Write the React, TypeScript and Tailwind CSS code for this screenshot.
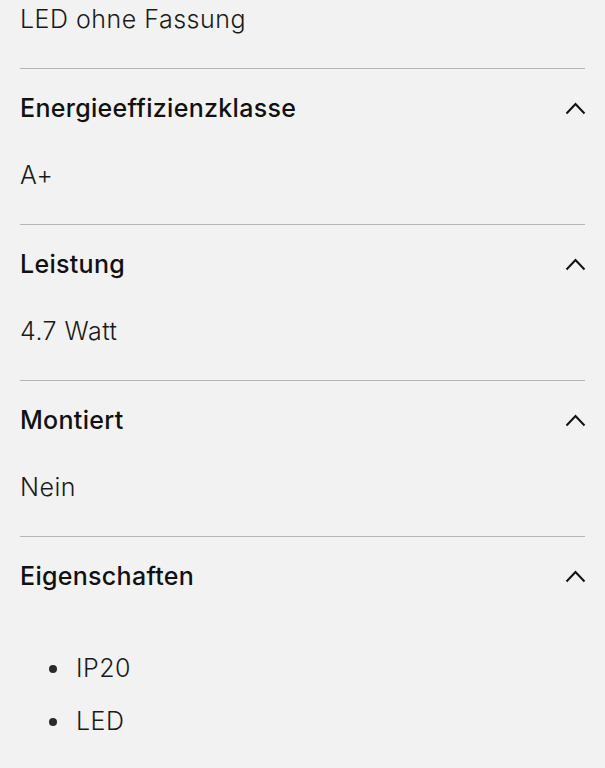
const sections = [
    {title: "Energieeffizienzklasse", value: "A+"},
    {title: "Leistung", value: "4.7 Watt"},
    {title: "Montiert", value: "Nein"},
]

function Chevron() {
    return (
        <svg width="21" height="13" viewBox="0 0 21 13" fill="none" className="shrink-0 -mr-[1px]">
            <polyline points="1.5,11.5 10.5,2 19.5,11.5" stroke="#111" strokeWidth="2" strokeLinejoin="miter"/>
        </svg>
    )
}

function Header({title}: { title: string }) {
    return (
        <div className="h-[80px] flex items-center justify-between border-t border-[#b5b5b5]">
            <h2 className="text-[25px] font-medium text-[#111] tracking-[0.3px]">{title}</h2>
            <Chevron/>
        </div>
    )
}

export default function App() {
    return (
        <div className="min-h-[768px] bg-[#f2f2f2] px-5 font-['Inter',sans-serif] text-[#1a1a1a] overflow-hidden">
            <div className="h-[38px] leading-[38px] text-[25px] font-light tracking-[0.5px] mb-[30px]">LED ohne Fassung</div>
            {sections.map(s => (
                <div key={s.title}>
                    <Header title={s.title}/>
                    <div className="pt-[9px] pb-[31px] leading-[36px] text-[25px] font-light tracking-[0.5px]">{s.value}</div>
                </div>
            ))}
            <Header title="Eigenschaften"/>
            <ul className="pt-[26px] pl-[29px]">
                {["IP20", "LED"].map(item => (
                    <li key={item} className="h-[53px] flex items-center gap-[19px] text-[25px] font-light tracking-[0.5px]">
                        <span className="w-2 h-2 rounded-full bg-[#2a2a2a]"/>
                        {item}
                    </li>
                ))}
            </ul>
        </div>
    )
}
